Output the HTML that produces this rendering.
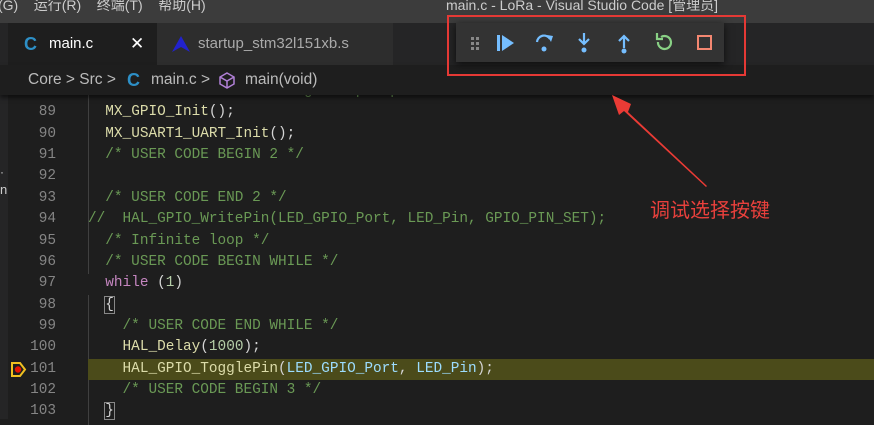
<!DOCTYPE html>
<html><head><meta charset="utf-8"><style>
*{margin:0;padding:0;box-sizing:border-box}
body{width:874px;height:419px;overflow:hidden;background:#1e1e1e;position:relative;font-family:"Liberation Sans","Noto Sans CJK SC",sans-serif}
.title{position:absolute;left:0;top:0;width:874px;height:23px;background:#3c3c3c;color:#ccc;font-size:14px}
.title span{position:absolute;top:-5px;white-space:nowrap}
.tabs{position:absolute;left:0;top:23px;width:874px;height:42px;background:#252526}
.tab{position:absolute;top:0;height:42px;color:#ccc;font-size:15px;line-height:42px}
.bc{position:absolute;left:0;top:65px;width:874px;height:30px;background:#1e1e1e;color:#bbb;font-size:15.5px;line-height:30px;box-shadow:0 3px 4px rgba(0,0,0,.5);z-index:3}
.strip{position:absolute;left:0;top:95px;width:8px;height:324px;background:#252526}
.code{position:absolute;left:0;top:81px;width:874px;font-family:"Liberation Mono",monospace;font-size:14.4px}
.ln{height:21.36px;line-height:21.36px;position:relative;white-space:pre}
.n{position:absolute;right:818px;color:#858585;text-align:right}
.t{position:absolute;left:88px;color:#d4d4d4}
.c{color:#6a9955}.f{color:#dcdcaa}.k{color:#c586c0}.v{color:#9cdcfe}.m{color:#b5cea8}
.hl{position:absolute;left:88px;right:0;top:0;height:21.36px;background:#4b4b1a}
.guide{position:absolute;left:88px;width:1px;background:#404040}
</style></head><body>
<div class="title">
<span style="left:-2px">(G)&nbsp;&nbsp;&nbsp;&nbsp;运行(R)&nbsp;&nbsp;&nbsp;&nbsp;终端(T)&nbsp;&nbsp;&nbsp;&nbsp;帮助(H)</span>
<span style="left:446px">main.c - LoRa - Visual Studio Code [管理员]</span>
</div>
<div class="tabs">
<div class="tab" style="left:8px;width:149px;background:#1e1e1e;color:#fff"><span style="position:absolute;left:16px;color:#2d8fc6;font-weight:bold;font-size:18px">C</span><span style="position:absolute;left:41px">main.c</span><span style="position:absolute;left:122px;font-size:17px">✕</span></div>
<div class="tab" style="left:157px;width:236px;background:#2d2d2d;color:#aaa"><svg style="position:absolute;left:15px;top:13px" width="18" height="16"><path d="M9 0L18 16L9 11L0 16Z" fill="#2222cc"/></svg><span style="position:absolute;left:41px">startup_stm32l151xb.s</span></div>
</div>
<div class="bc"><span style="position:absolute;left:28px">Core &gt; Src &gt;</span><span style="position:absolute;left:127px;color:#2d8fc6;font-weight:bold;font-size:18px">C</span><span style="position:absolute;left:151px">main.c &gt;</span>
<svg style="position:absolute;left:219px;top:7px" width="16" height="17" viewBox="0 0 16 17"><path d="M8 1L15 5V12L8 16L1 12V5Z M1 5L8 9L15 5 M8 9V16" fill="none" stroke="#b180d7" stroke-width="1.5"/></svg>
<span style="position:absolute;left:245px">main(void)</span></div>
<div class="strip"></div>
<div style="position:absolute;left:0;top:165px;color:#ccc;font-size:12px">·</div>
<div style="position:absolute;left:0;top:182px;color:#ccc;font-size:13px">n</div>
<div class="code">
<div class="guide" style="top:0;height:193px"></div>
<div class="guide" style="top:214px;height:130px"></div>
<div class="ln"><span class="n">88</span><span class="t c">  /* Initialize all configured peripherals */</span></div>
<div class="ln"><span class="n">89</span><span class="t">  <span class="f">MX_GPIO_Init</span>();</span></div>
<div class="ln"><span class="n">90</span><span class="t">  <span class="f">MX_USART1_UART_Init</span>();</span></div>
<div class="ln"><span class="n">91</span><span class="t c">  /* USER CODE BEGIN 2 */</span></div>
<div class="ln"><span class="n">92</span></div>
<div class="ln"><span class="n">93</span><span class="t c">  /* USER CODE END 2 */</span></div>
<div class="ln"><span class="n">94</span><span class="t c">//  HAL_GPIO_WritePin(LED_GPIO_Port, LED_Pin, GPIO_PIN_SET);</span></div>
<div class="ln"><span class="n">95</span><span class="t c">  /* Infinite loop */</span></div>
<div class="ln"><span class="n">96</span><span class="t c">  /* USER CODE BEGIN WHILE */</span></div>
<div class="ln"><span class="n">97</span><span class="t">  <span class="k">while</span> (<span class="m">1</span>)</span></div>
<div class="ln"><span class="n">98</span><span class="t">  <span style="outline:1px solid #888">{</span></span></div>
<div class="ln"><span class="n">99</span><span class="t c">    /* USER CODE END WHILE */</span></div>
<div class="ln"><span class="n">100</span><span class="t">    <span class="f">HAL_Delay</span>(<span class="m">1000</span>);</span></div>
<div class="ln"><div class="hl"></div><svg style="position:absolute;left:11px;top:3px" width="16" height="15"><path d="M1 1H9L14 7.5L9 14H1Z" fill="#1e1e1e" stroke="#f0c020" stroke-width="2"/><circle cx="7" cy="7.5" r="3.2" fill="#e51400"/></svg><span class="n">101</span><span class="t">    <span class="f">HAL_GPIO_TogglePin</span>(<span class="v">LED_GPIO_Port</span>, <span class="v">LED_Pin</span>);</span></div>
<div class="ln"><span class="n">102</span><span class="t c">    /* USER CODE BEGIN 3 */</span></div>
<div class="ln"><span class="n">103</span><span class="t">  <span style="outline:1px solid #888">}</span></span></div>
</div>
<div style="position:absolute;left:456px;top:23px;width:268px;height:39px;background:#333;box-shadow:0 2px 8px rgba(0,0,0,.7);z-index:5">
<svg width="268" height="39">
<g fill="#888"><rect x="15" y="14" width="3" height="3"/><rect x="20" y="14" width="3" height="3"/><rect x="15" y="19" width="3" height="3"/><rect x="20" y="19" width="3" height="3"/><rect x="15" y="24" width="3" height="3"/><rect x="20" y="24" width="3" height="3"/></g>
<g fill="#75beff"><rect x="41" y="12" width="3" height="16"/><path d="M46 12L58 20L46 28Z"/></g>
<g fill="none" stroke="#75beff" stroke-width="2.2"><path d="M81 19A7 7 0 0 1 94 16"/></g><path d="M91 12L97 13L95 19Z" fill="#75beff"/><circle cx="88" cy="26" r="2.5" fill="#75beff"/>
<g stroke="#75beff" stroke-width="2.2" fill="none"><path d="M128 10V21M123 16L128 21L133 16"/><path d="M168 25V13M163 18L168 13L173 18"/></g><circle cx="128" cy="27" r="2.5" fill="#75beff"/><circle cx="168" cy="28" r="2.5" fill="#75beff"/>
<path d="M202 19A6.5 6.5 0 1 0 205 14" fill="none" stroke="#89d185" stroke-width="2.2"/><path d="M201 10V16H207" fill="none" stroke="#89d185" stroke-width="2.2"/>
<rect x="242" y="13" width="13" height="13" fill="none" stroke="#f48771" stroke-width="2"/>
</svg></div>
<div style="position:absolute;left:447px;top:15px;width:299px;height:61px;border:2px solid #e53935;z-index:6"></div>
<svg style="position:absolute;left:0;top:0;z-index:6" width="874" height="419"><path d="M707 186L628 112L631 104L612 95L619 115L624 111L706 187Z" fill="#ea3b35"/></svg>
<div style="position:absolute;left:650px;top:194px;color:#e8403c;font-size:20px;font-family:'Noto Sans CJK SC',sans-serif;z-index:6">调试选择按键</div>
</body></html>
